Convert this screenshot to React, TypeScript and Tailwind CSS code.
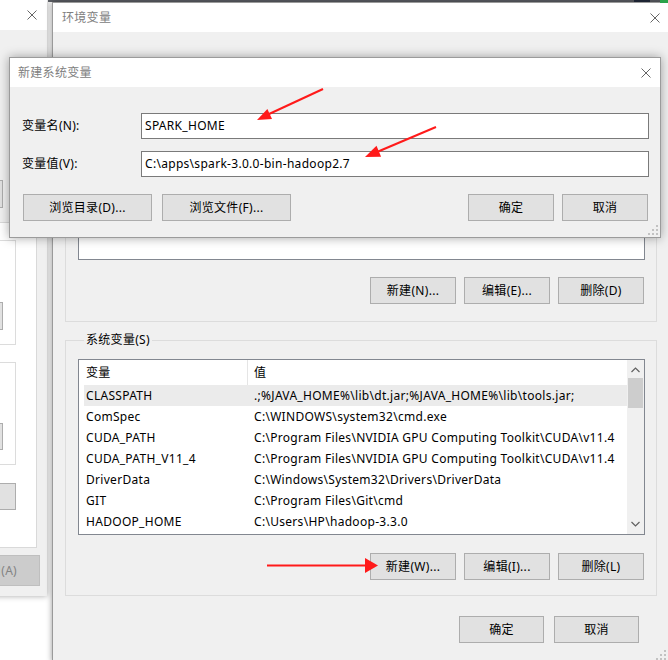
import React from "react";

function CloseX() {
  return (
    <svg width="10" height="10" viewBox="0 0 10 10" className="block">
      <path d="M0.5 0.5 L9.5 9.5 M9.5 0.5 L0.5 9.5" stroke="#666" strokeWidth="1" fill="none" />
    </svg>
  );
}

function Grip() {
  return (
    <svg width="10" height="10" viewBox="0 0 10 10" className="block">
      <rect x="8" y="0" width="2" height="2" fill="#c2c2c2" />
      <rect x="4" y="4" width="2" height="2" fill="#c2c2c2" />
      <rect x="8" y="4" width="2" height="2" fill="#c2c2c2" />
      <rect x="0" y="8" width="2" height="2" fill="#c2c2c2" />
      <rect x="4" y="8" width="2" height="2" fill="#c2c2c2" />
      <rect x="8" y="8" width="2" height="2" fill="#c2c2c2" />
    </svg>
  );
}

function Btn({ children, className = "" }: { children?: React.ReactNode; className?: string }) {
  return (
    <div
      className={`flex items-center justify-center h-[27px] shrink-0 bg-[#e1e1e1] border border-[#adadad] text-[12px] text-black leading-none ${className}`}
    >
      {children}
    </div>
  );
}

const rows: [string, string][] = [
  ["CLASSPATH", ".;%JAVA_HOME%\\lib\\dt.jar;%JAVA_HOME%\\lib\\tools.jar;"],
  ["ComSpec", "C:\\WINDOWS\\system32\\cmd.exe"],
  ["CUDA_PATH", "C:\\Program Files\\NVIDIA GPU Computing Toolkit\\CUDA\\v11.4"],
  ["CUDA_PATH_V11_4", "C:\\Program Files\\NVIDIA GPU Computing Toolkit\\CUDA\\v11.4"],
  ["DriverData", "C:\\Windows\\System32\\Drivers\\DriverData"],
  ["GIT", "C:\\Program Files\\Git\\cmd"],
  ["HADOOP_HOME", "C:\\Users\\HP\\hadoop-3.3.0"],
];

function LeftWindow() {
  return (
    <div className="absolute left-[-300px] top-0 w-[347px] h-[596px] bg-[#f0f0f0] shadow-[0_0_6px_rgba(0,0,0,0.35)] flex flex-col items-end">
      <div className="w-full h-[30px] bg-white flex items-center justify-end pr-[10px]">
        <CloseX />
      </div>
      <div className="mt-[150px] mr-[44px] w-[80px] h-[28px] bg-[#e1e1e1] border border-[#adadad]" />
      <div className="mt-[14px] mr-[10px] w-[300px] h-[326px] bg-white border border-[#d9d9d9] flex flex-col items-end">
        <div className="mt-[17px] mr-[20px] w-[250px] h-[105px] border border-[#dcdcdc] flex flex-col items-end">
          <div className="mt-[61px] mr-[12px] w-[80px] h-[28px] bg-[#e1e1e1] border border-[#adadad]" />
        </div>
        <div className="mt-[17px] mr-[20px] w-[250px] h-[103px] border border-[#dcdcdc] flex flex-col items-end">
          <div className="mt-[60px] mr-[12px] w-[80px] h-[27px] bg-[#e1e1e1] border border-[#adadad]" />
        </div>
        <div className="mt-[18px] mr-[20px] w-[80px] h-[27px] bg-[#e1e1e1] border border-[#adadad]" />
      </div>
      <div className="mt-[7px] mr-[7px] w-[85px] h-[31px] bg-[#cccccc] border border-[#bfbfbf] flex items-center justify-end pr-[22px] text-[12px] text-[#838383]">
        应用(A)
      </div>
    </div>
  );
}

function EnvWindow() {
  return (
    <div className="absolute left-[52px] top-[2px] w-[618px] h-[660px] bg-[#f0f0f0] border-l border-t border-[#9a9a9a] shadow-[0_0_6px_rgba(0,0,0,0.4)] flex flex-col">
      <div className="h-[29px] bg-white flex items-center justify-between pl-[9px] pr-[10px]">
        <span className="text-[12px] text-[#808080]">环境变量</span>
        <CloseX />
      </div>

      {/* user variables */}
      <fieldset className="mt-[30px] ml-[12px] mr-[13px] border border-[#dcdcdc] pl-[12px] pr-[11px] pb-[17px] flex flex-col">
        <legend className="ml-[6px] px-[2px] h-[16px] leading-[16px] text-[12px]">HP 的用户变量(U)</legend>
        <div className="mt-[8px] h-[174px] bg-white border border-[#828790]" />
        <div className="mt-[17px] flex justify-end gap-[8px] pr-[1px]">
          <Btn className="w-[86px]">新建(N)...</Btn>
          <Btn className="w-[86px]">编辑(E)...</Btn>
          <Btn className="w-[86px]">删除(D)</Btn>
        </div>
      </fieldset>

      {/* system variables */}
      <fieldset className="mt-[10px] ml-[12px] mr-[13px] border border-[#dcdcdc] pl-[12px] pr-[11px] pb-[15px] flex flex-col">
        <legend className="ml-[6px] px-[2px] h-[16px] leading-[16px] text-[12px] text-black">系统变量(S)</legend>
        <div className="mt-[11px] bg-white border border-[#828790] flex h-[176px]">
          <div className="flex-1 flex flex-col">
            <div className="h-[25px] flex items-stretch pl-[5px] text-[12px]">
              <div className="w-[163px] pl-[2px] flex items-center">变量</div>
              <div className="w-px bg-[#e5e5e5]" />
              <div className="flex-1 pl-[6px] flex items-center">值</div>
            </div>
            <div className="flex flex-col pl-[5px]">
              {rows.map(([k, v], i) => (
                <div
                  key={k}
                  className={`h-[21px] flex items-center text-[12px] whitespace-nowrap ${i === 0 ? "bg-[#ebebeb]" : ""}`}
                >
                  <div className="w-[163px] shrink-0 pl-[2px]">{k}</div>
                  <div className="pl-[7px] overflow-hidden">{v}</div>
                </div>
              ))}
            </div>
          </div>
          <div className="w-[17px] bg-[#f0f0f0] flex flex-col items-center">
            <svg width="9" height="6" viewBox="0 0 9 6" className="mt-[7px] block">
              <polyline points="0.5,5 4.5,1 8.5,5" fill="none" stroke="#606060" strokeWidth="1.2" />
            </svg>
            <div className="mt-[5px] w-[15px] h-[30px] bg-[#cdcdcd]" />
            <div className="flex-1" />
            <svg width="9" height="6" viewBox="0 0 9 6" className="mb-[7px] block">
              <polyline points="0.5,1 4.5,5 8.5,1" fill="none" stroke="#606060" strokeWidth="1.2" />
            </svg>
          </div>
        </div>
        <div className="mt-[18px] flex justify-end gap-[8px] pr-[1px]">
          <Btn className="w-[86px]">新建(W)...</Btn>
          <Btn className="w-[86px]">编辑(I)...</Btn>
          <Btn className="w-[86px]">删除(L)</Btn>
        </div>
      </fieldset>

      <div className="mt-[20px] flex justify-end gap-[10px] mr-[31px]">
        <Btn className="w-[85px]">确定</Btn>
        <Btn className="w-[85px]">取消</Btn>
      </div>
      <div className="flex-1" />
      <div className="flex justify-end pr-[4px] pb-[2px]">
        <Grip />
      </div>
    </div>
  );
}

function NewVarDialog() {
  return (
    <div className="absolute left-[9px] top-[57px] w-[652px] h-[181px] bg-[#f0f0f0] border border-[#9b9b9b] shadow-[0_0_10px_rgba(0,0,0,0.35)] flex flex-col">
      <div className="h-[29px] bg-white flex items-center justify-between pl-[8px] pr-[9px]">
        <span className="text-[12px] text-[#808080]">新建系统变量</span>
        <CloseX />
      </div>
      <div className="mt-[26px] flex items-center pl-[12px] pr-[11px]">
        <div className="w-[119px] text-[12px]">变量名(N):</div>
        <div className="flex-1 h-[26px] bg-white border border-[#7a7a7a] flex items-center pl-[3px] text-[12px]">
          SPARK_HOME
        </div>
      </div>
      <div className="mt-[12px] flex items-center pl-[12px] pr-[11px]">
        <div className="w-[119px] text-[12px]">变量值(V):</div>
        <div className="flex-1 h-[26px] bg-white border border-[#7a7a7a] flex items-center pl-[3px] text-[12px]">
          C:\apps\spark-3.0.0-bin-hadoop2.7
        </div>
      </div>
      <div className="mt-[17px] flex items-center pl-[13px] pr-[12px]">
        <Btn className="w-[129px]">浏览目录(D)...</Btn>
        <Btn className="w-[129px] ml-[10px]">浏览文件(F)...</Btn>
        <div className="flex-1" />
        <Btn className="w-[86px]">确定</Btn>
        <Btn className="w-[86px] ml-[8px]">取消</Btn>
      </div>
      <div className="flex-1" />
      <div className="flex justify-end pr-[2px] pb-[2px]">
        <Grip />
      </div>
    </div>
  );
}

function Arrows() {
  return (
    <svg className="absolute left-0 top-0 pointer-events-none" width="668" height="660" viewBox="0 0 668 660">
      <line x1="323" y1="89" x2="268" y2="114.5" stroke="#ff1a1a" strokeWidth="2" />
      <polygon points="257,120 272,119 267.4,109" fill="#ff1a1a" />
      <line x1="436" y1="127" x2="377" y2="152" stroke="#ff1a1a" strokeWidth="2" />
      <polygon points="365,157 381.1,156.7 376.5,145.7" fill="#ff1a1a" />
      <line x1="267" y1="565.5" x2="366" y2="565.5" stroke="#ff1a1a" strokeWidth="2" />
      <polygon points="378,565.5 365,558 365,573" fill="#ff1a1a" />
    </svg>
  );
}

export default function App() {
  return (
    <div className="relative w-[668px] h-[660px] overflow-hidden bg-white text-black font-['Segoe_UI','Noto_Sans','Noto_Sans_CJK_SC',sans-serif] text-[12px] tracking-[0.3px]">
      <LeftWindow />
      <div className="absolute left-[48px] top-0 w-[620px] h-[2px] bg-[#5b5e64]" />
      <EnvWindow />
      <div className="absolute left-[634px] top-0 w-[16px] h-[2px] bg-[#1d2433]" />
      <div className="absolute left-[660px] top-0 w-[8px] h-[3px] bg-[#2aa34a]" />
      <NewVarDialog />
      <Arrows />
    </div>
  );
}
